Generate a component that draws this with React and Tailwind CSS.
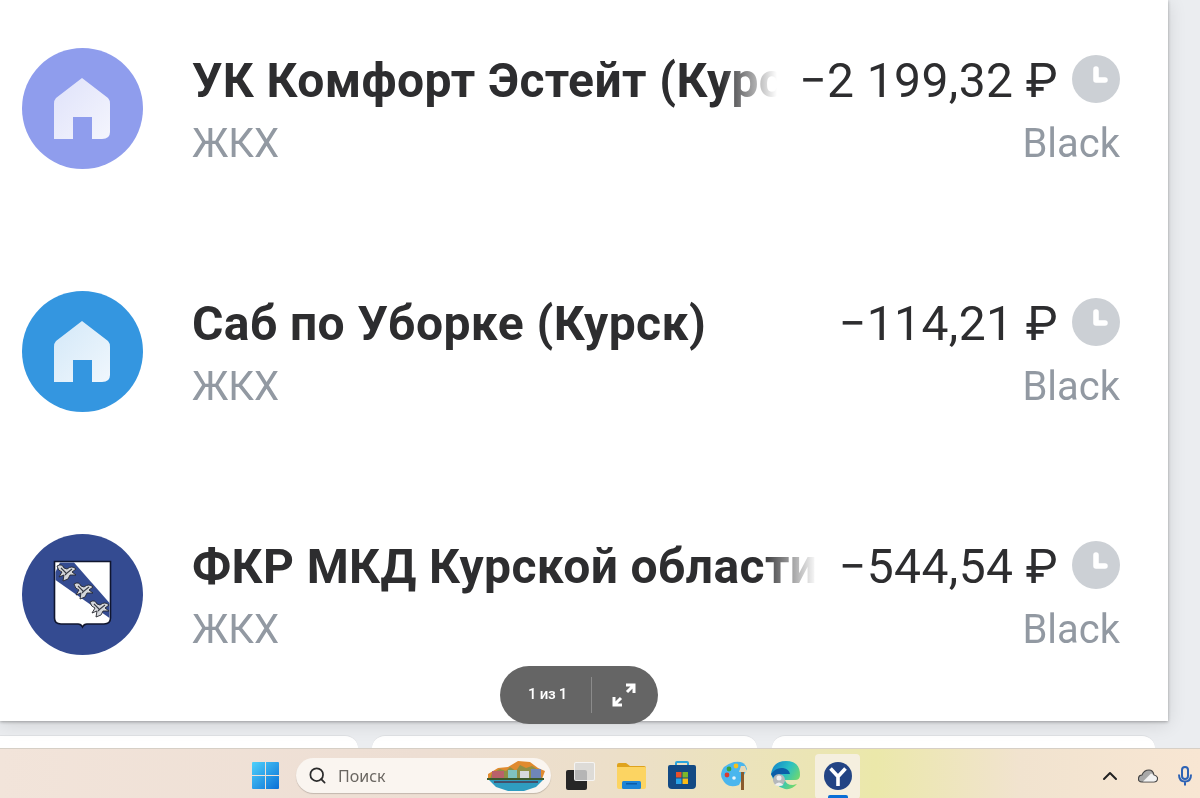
import { Search, ChevronUp } from "lucide-react";

const rows = [
  { id: "a", title: "УК Комфорт Эстейт (Курск)", amount: "−2 199,32 ₽", logo: "violet" },
  { id: "b", title: "Саб по Уборке (Курск)", amount: "−114,21 ₽", logo: "blue" },
  { id: "c", title: "ФКР МКД Курской области", amount: "−544,54 ₽", logo: "arms" },
];

function HouseLogo({ id, bg, stopA, stopB }) {
  return (
    <svg viewBox="0 0 121 121" className="w-[121px] h-[121px] shrink-0">
      <defs>
        <linearGradient id={id} x1="0" y1="0" x2="1" y2="1">
          <stop offset="0" stopColor={stopA} />
          <stop offset="1" stopColor={stopB} />
        </linearGradient>
      </defs>
      <circle cx="60.5" cy="60.5" r="60.5" fill={bg} />
      <path
        d="M60 30 L86 50 Q88 52 88 56 V84 Q88 91 80 91 H70 V69 H51 V91 H32 V56 Q32 52 34 50 Z"
        fill={`url(#${id})`}
      />
    </svg>
  );
}

function Bird({ x, y }) {
  return (
    <g transform={`translate(${x} ${y})`}>
      {/* body and two raised wings */}
      <path d="M-9 -6 Q-4 -9 -2 -4 L1 -3 Q6 -7 10 -3 L6 0 L10 3 L4 3 L2 7 L-3 9 L-2 3 L-7 5 L-4 0 Q-8 -1 -9 -6 Z" fill="#d5d7db" stroke="#26282f" strokeWidth="0.9" strokeLinejoin="round" />
      <path d="M-5 -4 L0 1 M6 -3 L1 1 M-1 3 L1 1" stroke="#3a3d46" strokeWidth="1.1" fill="none" />
    </g>
  );
}

function ArmsLogo() {
  return (
    <svg viewBox="0 0 121 121" className="w-[121px] h-[121px] shrink-0">
      <circle cx="60.5" cy="60.5" r="60.5" fill="#344b91" />
      <path d="M32.5 27.5 H88.5 V84 Q88.5 90 82 90 H65 Q62 90 60.5 93 Q59 90 56 90 H39 Q32.5 90 32.5 84 Z" fill="#ffffff" stroke="#10162f" strokeWidth="1.6" />
      <path d="M33.5 38 L33.5 46 L87.5 84 L87.5 69 L52 28.5 H38 Z" fill="#344b91" />
      <Bird x={44} y={38} />
      <Bird x={61} y={56} />
      <Bird x={77} y={74} />
    </svg>
  );
}

function Clock() {
  return (
    <svg viewBox="0 0 48 48" className="w-12 h-12 shrink-0 mb-[4px]">
      <circle cx="24" cy="24" r="24" fill="#ccd0d5" />
      <path d="M24 14 V25 H33" fill="none" stroke="#ffffff" strokeWidth="5.5" strokeLinecap="round" strokeLinejoin="round" />
    </svg>
  );
}

function Row({ row }) {
  return (
    <div className="flex items-start h-[121px]">
      {row.logo === "violet" && <HouseLogo id="hv" bg="#8f9ded" stopA="#dfe2fa" stopB="#f4f5fd" />}
      {row.logo === "blue" && <HouseLogo id="hb" bg="#3496e0" stopA="#d3e8f8" stopB="#f0f7fd" />}
      {row.logo === "arms" && <ArmsLogo />}
      <div className="flex-1 min-w-0 ml-[49px] pt-[3px]">
        <div className="relative overflow-hidden whitespace-nowrap text-[48px] tracking-[0.4px] leading-[60px] font-bold text-[#2d2d2f]">
          {row.title}
          <div className="absolute right-0 top-0 bottom-0 w-[56px] bg-gradient-to-r from-white/0 to-white"></div>
        </div>
        <div className="mt-[3px] text-[40px] leading-[60px] text-[#9299a2]">ЖКХ</div>
      </div>
      <div className="shrink-0 ml-[22px] flex flex-col items-end pt-[3px]">
        <div className="flex items-center gap-[14px] h-[60px]">
          <span className="text-[48px] tracking-[0.4px] leading-[60px] text-[#2d2d2f] whitespace-nowrap">{row.amount}</span>
          <Clock />
        </div>
        <div className="mt-[3px] text-[40px] leading-[60px] text-[#9299a2]">Black</div>
      </div>
    </div>
  );
}

function Tabs() {
  return (
    <div className="flex h-[13px]">
      <div className="w-[358px] bg-white border-t border-[#dfe1e4] rounded-tr-[26px]"></div>
      <div className="ml-[14px] w-[385px] bg-white border-t border-[#dfe1e4] rounded-t-[26px]"></div>
      <div className="ml-[15px] w-[383px] bg-white border-t border-[#dfe1e4] rounded-t-[26px]"></div>
    </div>
  );
}

function WinLogo() {
  return (
    <svg viewBox="0 0 27 27" className="w-[27px] h-[27px]">
      <defs>
        <linearGradient id="win" x1="0" y1="0" x2="1" y2="1">
          <stop offset="0" stopColor="#4fd1fb" />
          <stop offset="1" stopColor="#0a6fd6" />
        </linearGradient>
      </defs>
      <path d="M1 0 H13 V13 H0 V1 Q0 0 1 0 Z M14 0 H26 Q27 0 27 1 V13 H14 Z M0 14 H13 V27 H1 Q0 27 0 26 Z M14 14 H27 V26 Q27 27 26 27 H14 Z" fill="url(#win)" />
    </svg>
  );
}

function Scene() {
  return (
    <svg viewBox="0 0 60 32" className="w-[60px] h-[32px]">
      <path d="M2 14 L12 8 L22 7 L32 1 L44 2 L52 8 L59 11 L56 19 L2 19 Z" fill="#e08a2e" />
      <path d="M6 13 L14 9 L20 11 L24 7 L30 11 L34 5 L40 8 L46 6 L54 11 L56 19 L4 19 Z" fill="#8f8f45" />
      <rect x="6" y="11" width="12" height="7" fill="#b9616a" />
      <rect x="22" y="10" width="9" height="8" fill="#7fc3c0" />
      <rect x="34" y="11" width="9" height="7" fill="#d6d8dc" />
      <rect x="45" y="9" width="10" height="9" fill="#6f86b8" />
      <rect x="1" y="18" width="57" height="2" fill="#3c5a2c" />
      <path d="M3 20 H57 L50 27 L38 31 H22 L10 27 Z" fill="#2f9cc0" />
      <rect x="8" y="21" width="44" height="2" fill="#44506a" />
    </svg>
  );
}

function TaskView() {
  return (
    <div className="relative w-[29px] h-[28px]">
      <div className="absolute left-0 bottom-0 w-[21px] h-[20px] rounded-[2px] bg-[#262626]"></div>
      <div className="absolute right-0 top-0 w-[21px] h-[19px] rounded-[2px] bg-[#d9d9d9]/80 border border-white/70"></div>
    </div>
  );
}

function Folder() {
  return (
    <svg viewBox="0 0 29 26" className="w-[29px] h-[26px]">
      <path d="M0 2 Q0 0 2 0 H9 L13 3 H27 Q29 3 29 5 V8 H0 Z" fill="#dfa31d" />
      <path d="M0 4 H28 Q29 4 29 5 V24 Q29 26 27 26 H2 Q0 26 0 24 Z" fill="#fcd462" />
      <rect x="5" y="18" width="19" height="8" rx="1.5" fill="#1d84d6" />
      <rect x="9" y="20" width="11" height="1.5" fill="#0d5ba6" />
    </svg>
  );
}

function Store() {
  return (
    <svg viewBox="0 0 28 29" className="w-[28px] h-[29px]">
      <path d="M8 6 V2 Q8 1 9 1 H19 Q20 1 20 2 V6" fill="none" stroke="#2ba5dd" strokeWidth="2" />
      <path d="M0 6 Q0 4 2 4 H26 Q28 4 28 6 V24 Q28 28 24 28 H4 Q0 28 0 24 Z" fill="#134a84" />
      <rect x="8" y="11" width="5.5" height="5.5" fill="#e9502b" />
      <rect x="14.5" y="11" width="5.5" height="5.5" fill="#7cb82b" />
      <rect x="8" y="17.5" width="5.5" height="5.5" fill="#27a4e8" />
      <rect x="14.5" y="17.5" width="5.5" height="5.5" fill="#fbbc15" />
    </svg>
  );
}

function Paint() {
  return (
    <svg viewBox="0 0 30 29" className="w-[30px] h-[29px] ml-[3px] mr-[-2px]">
      <path d="M13 1 Q24 -1 26 8 L18 24 Q10 27 5 23 Q0 18 0 13 Q1 4 13 1 Z" fill="#4ab6ee" />
      <circle cx="6" cy="14" r="2.4" fill="#d93b30" />
      <circle cx="8" cy="8" r="2.4" fill="#3aa33c" />
      <circle cx="15" cy="5" r="2.4" fill="#f4c21d" />
      <circle cx="13" cy="17" r="1.8" fill="#e9f5fc" />
      <rect x="20" y="11" width="3" height="18" fill="#8a5a2c" />
      <path d="M18 11 L20 5 H24 L26 11 Z" fill="#e7d9b8" />
    </svg>
  );
}

function Edge() {
  return (
    <svg viewBox="0 0 30 29" className="w-[30px] h-[29px]">
      <defs>
        <linearGradient id="edge" x1="0" y1="0" x2="1" y2="0.6">
          <stop offset="0" stopColor="#0f7dcb" />
          <stop offset="0.55" stopColor="#2ac0c4" />
          <stop offset="1" stopColor="#74d96a" />
        </linearGradient>
      </defs>
      <path d="M0 13 Q2 0 15 0 Q29 0 29 14 Q29 19 24 19 H14 Q15 24 22 24 L26 23 Q21 29 14 28 Q4 26 0 13 Z" fill="url(#edge)" />
      <path d="M0 13 Q5 6 12 7 Q18 8 19 13 H11 Q8 14 8 19 Q2 18 0 13 Z" fill="#0c5fa8" />
      <circle cx="8" cy="19" r="6" fill="#b5b8bb" />
      <circle cx="8" cy="17" r="2.5" fill="#f0f0f0" />
      <path d="M3.5 24 Q8 19 12.5 24 Q8 26 3.5 24 Z" fill="#f0f0f0" />
    </svg>
  );
}

function YandexCircle() {
  return (
    <svg viewBox="0 0 28 28" className="w-[28px] h-[28px]">
      <circle cx="14" cy="14" r="14" fill="#234484" />
      <path d="M6.5 6.5 L14 14.5 L21.5 6.5 M14 14.5 V24" fill="none" stroke="#ffffff" strokeWidth="3.6" />
    </svg>
  );
}

function Taskbar() {
  return (
    <div className="h-[50px] flex items-center pt-[4px] pl-[252px] pr-[8px] border-t border-[#d6cfc6] bg-[linear-gradient(90deg,#f2e4da_0%,#edded3_35%,#ecdfc8_52%,#ebe5b4_68%,#ebe8aa_73%,#f1e3cf_85%,#f8e6d3_100%)]">
      <WinLogo />
      <div className="ml-[17px] w-[255px] h-[35px] rounded-full bg-[#faf5f0] shadow-[0_1px_1px_rgba(0,0,0,0.18)] flex items-center pl-[12px] pr-[5px]">
        <Search className="w-[19px] h-[19px] text-[#2b2b2b]" strokeWidth={2.2} />
        <span className="ml-[11px] font-['Noto_Sans',sans-serif] text-[16px] text-[#6a6661]">Поиск</span>
        <div className="ml-auto flex items-center"><Scene /></div>
      </div>
      <div className="ml-[15px] flex items-center gap-[22px]">
        <TaskView />
        <Folder />
        <Store />
        <Paint />
        <Edge />
      </div>
      <div className="relative ml-[14px] w-[45px] h-[45px] mt-[1px] rounded-[4px] bg-[#f5efdf] flex items-center justify-center pb-[1px]">
        <YandexCircle />
        <div className="absolute bottom-0 left-[13px] w-[20px] h-[4px] rounded-t-[2px] bg-[#0a6fd6]"></div>
      </div>
      <div className="ml-auto flex items-center">
        <ChevronUp className="w-6 h-6 text-[#222]" strokeWidth={2} />
        <svg viewBox="0 0 20 14" className="ml-[16px] w-[20px] h-[14px]">
          <path d="M4 13 Q0 13 0.5 9 Q1 6 4 6 Q6 1 11 1 Q15 1 16 6 Q20 7 19.5 10 Q19 13 16 13 Z" fill="#a8a8a8" stroke="#444444" strokeWidth="1.1" />
          <path d="M5 12.4 L13 4.5 Q15 5 15.6 6.5 Q19 7.4 18.9 10 Q18.6 12.4 16 12.4 Z" fill="#f2f2f2" />
        </svg>
        <svg viewBox="0 0 14 20" className="ml-[20px] w-[14px] h-[20px]">
          <rect x="4" y="1" width="6" height="12" rx="3" fill="none" stroke="#2d62b5" strokeWidth="2" />
          <path d="M1 8.5 Q1 15.5 7 15.5 Q13 15.5 13 8.5 M7 15.5 V19.5" fill="none" stroke="#2d62b5" strokeWidth="2" />
        </svg>
      </div>
    </div>
  );
}

export default function App() {
  return (
    <div className="w-[1200px] h-[798px] overflow-hidden flex flex-col bg-[#ebedf0] font-['Roboto',sans-serif] blur-[0.5px]">
      <div className="relative shrink-0 h-[735px] pr-[32px] pb-[14px]">
        <div className="h-[721px] bg-white shadow-[0_1px_3px_rgba(0,0,0,0.3),0_3px_18px_rgba(0,0,0,0.12)] pt-[48px] pl-[22px] pr-[48px] flex flex-col gap-[122px]">
          {rows.map((row) => (
            <Row key={row.id} row={row} />
          ))}
        </div>
        {/* page counter */}
        <div className="absolute left-[500px] top-[666px] w-[158px] h-[58px] rounded-full bg-[#656565] flex items-center text-white">
          <div className="w-[91px] pl-[4px] text-center text-[15px] tracking-[-0.3px] font-medium pb-[2px]">1 из 1</div>
          <div className="w-px h-[36px] bg-white/25"></div>
          <div className="flex-1 flex justify-center pr-[3px]">
            <svg viewBox="0 0 24 24" className="w-[24px] h-[24px]">
              <path d="M14 2 H22 V10 M22 2 L15 9 M2 14 V22 H10 M2 22 L9 15" fill="none" stroke="#ffffff" strokeWidth="3" />
            </svg>
          </div>
        </div>
      </div>
      <Tabs />
      <Taskbar />
    </div>
  );
}
